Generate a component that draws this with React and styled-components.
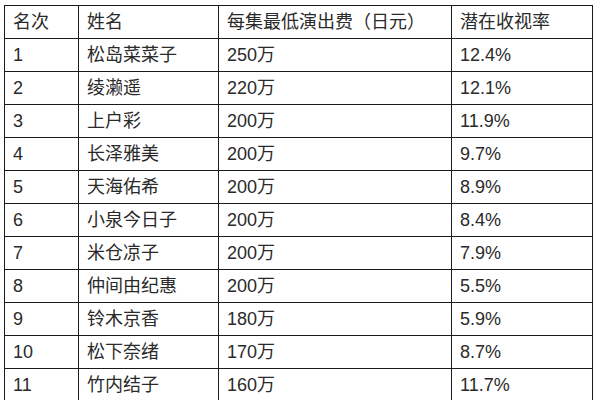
import React from 'react';
import styled, { createGlobalStyle } from 'styled-components';

const GlobalStyle = createGlobalStyle`
  html, body {
    margin: 0;
    padding: 0;
    background: #fff;
  }
`;

const Page = styled.div`
  padding: 5px 0 0 4px;
  width: 600px;
  height: 400px;
  box-sizing: border-box;
  overflow: hidden;
`;

const Table = styled.table`
  width: 588px;
  table-layout: fixed;
  border-collapse: collapse;
  font-family: 'Liberation Sans', 'Noto Sans CJK SC', sans-serif;
  font-size: 18px;
  color: #2a2a2a;
`;

const Row = styled.tr`
  height: 33px;
`;

const Cell = styled.td`
  border: 1px solid #1a1a1a;
  padding: 0 0 0 8px;
  height: 32px;
  line-height: 32px;
  white-space: nowrap;
  vertical-align: middle;
  font-weight: normal;
  text-align: left;
`;

const columns = [74, 140, 233, 141];

const header = ['名次', '姓名', '每集最低演出费（日元）', '潜在收视率'];

const rows = [
  ['1', '松岛菜菜子', '250万', '12.4%'],
  ['2', '绫濑遥', '220万', '12.1%'],
  ['3', '上户彩', '200万', '11.9%'],
  ['4', '长泽雅美', '200万', '9.7%'],
  ['5', '天海佑希', '200万', '8.9%'],
  ['6', '小泉今日子', '200万', '8.4%'],
  ['7', '米仓凉子', '200万', '7.9%'],
  ['8', '仲间由纪惠', '200万', '5.5%'],
  ['9', '铃木京香', '180万', '5.9%'],
  ['10', '松下奈绪', '170万', '8.7%'],
  ['11', '竹内结子', '160万', '11.7%'],
];

export default function App() {
  return (
    <>
      <GlobalStyle />
      <Page>
        <Table>
          <colgroup>
            {columns.map((w, i) => (
              <col key={i} style={{ width: w }} />
            ))}
          </colgroup>
          <thead>
            <Row>
              {header.map((h) => (
                <Cell as="th" key={h}>{h}</Cell>
              ))}
            </Row>
          </thead>
          <tbody>
            {rows.map((r) => (
              <Row key={r[0]}>
                {r.map((c, i) => (
                  <Cell key={i}>{c}</Cell>
                ))}
              </Row>
            ))}
          </tbody>
        </Table>
      </Page>
    </>
  );
}
